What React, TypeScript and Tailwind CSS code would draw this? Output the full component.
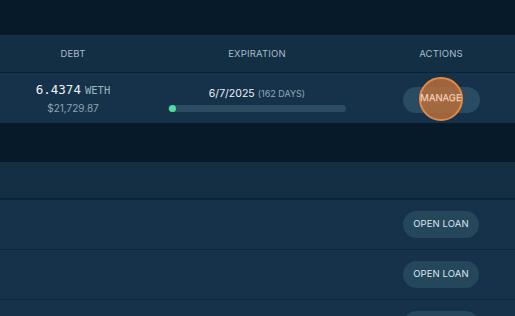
import React from 'react'

const sans = { fontFamily: 'Inter, "Noto Sans", sans-serif' }
const mono = { fontFamily: '"DejaVu Sans Mono", monospace' }

function HeaderRow({ labels }: { labels: string[] }) {
  return (
    <div className="grid h-[38px] grid-cols-3 items-center border-b border-[#0a2233] bg-[#132f44]">
      {labels.map((l, i) => (
        <div key={i} className="pt-[1px] text-center text-[9.5px] tracking-[0.02em] text-[#a9bccb]">
          {l}
        </div>
      ))}
    </div>
  )
}

function LoanRow() {
  return (
    <div className="grid h-[50px] grid-cols-3 items-center border-b border-[#0d2536] bg-[#15324a]">
      <div />
      <div />
      <div className="flex justify-center">
        <button className="h-[27px] w-[76px] rounded-full bg-[#24475c] text-[9.5px] tracking-[0.01em] text-[#dbe6ee]">
          OPEN LOAN
        </button>
      </div>
    </div>
  )
}

export default function App() {
  return (
    <div className="h-[316px] w-[515px] overflow-hidden bg-[#071a2a]" style={sans}>
      <div className="ml-[-19px] w-[552px]">
        <div className="h-[35px]" />

        {/* Active loans */}
        <HeaderRow labels={['DEBT', 'EXPIRATION', 'ACTIONS']} />
        <div className="grid h-[50px] grid-cols-3 items-center bg-[#15324a]">
          <div className="flex flex-col items-center pt-[1px]">
            <div className="flex items-baseline gap-[4px]">
              <span className="text-[12.5px] text-[#eef3f7]" style={mono}>
                6.4374
              </span>
              <span className="text-[10.5px] text-[#9fb2c1]" style={mono}>
                WETH
              </span>
            </div>
            <div className="mt-[1px] text-[10px] text-[#8ea3b3]">$21,729.87</div>
          </div>
          <div className="flex flex-col items-center px-[4px] pt-[2px]">
            <div className="flex items-baseline gap-[3px]">
              <span className="text-[10.5px] text-[#eef3f7]">6/7/2025</span>
              <span className="text-[9px] text-[#93a8b8]">(162 DAYS)</span>
            </div>
            <div className="relative mt-[3px] h-[7px] w-[178px] rounded-full bg-[#2b4c61]">
              <div className="absolute left-[1px] top-0 h-[7px] w-[7px] rounded-full bg-[#4fe0a0]" />
            </div>
          </div>
          <div className="flex justify-center pt-[1px]">
            <div className="relative">
              <button className="h-[26px] w-[77px] rounded-full bg-[#2a4c62] text-[9.5px] text-[#f0d3bd]">
                MANAGE
              </button>
              <div className="pointer-events-none absolute left-1/2 top-1/2 h-[44px] w-[44px] -translate-x-1/2 -translate-y-1/2 rounded-full border-2 border-[#e48a45] bg-[#c0703a]/80" />
              <span className="pointer-events-none absolute inset-0 flex items-center justify-center text-[9.5px] text-[#f3d6c2]">
                MANAGE
              </span>
            </div>
          </div>
        </div>

        <div className="h-[39px]" />

        {/* Available loans */}
        <div className="h-[38px] border-b-2 border-[#0c2434] bg-[#142f44]" />
        <LoanRow />
        <LoanRow />
        <LoanRow />
      </div>
    </div>
  )
}
